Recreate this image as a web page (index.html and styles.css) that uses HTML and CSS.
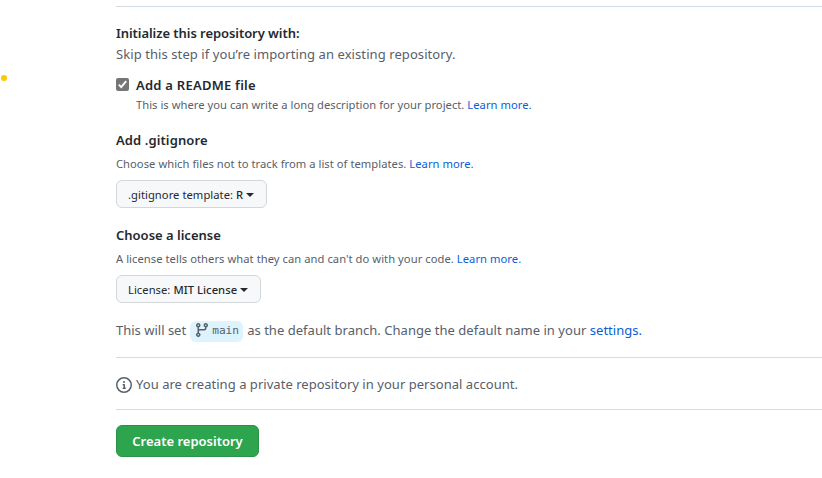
FILE: index.html
```html
<!DOCTYPE html>
<html lang="en">
<head>
<meta charset="utf-8">
<title>Create a new repository</title>
<link rel="stylesheet" href="styles.css">
</head>
<body>
<span class="dot"></span>
<main class="form">
  <section class="group init">
    <h2 class="heading h-init">Initialize this repository with:</h2>
    <p class="text t-skip">Skip this step if you’re importing an existing repository.</p>
    <div class="check-row">
      <svg class="check" width="13" height="13" viewBox="0 0 13 13"><rect width="13" height="13" rx="2" fill="#767676"/><path d="M2.8 6.7 5.2 9.2 10.2 3.2" fill="none" stroke="#fff" stroke-width="1.9"/></svg>
      <div>
        <h2 class="heading h-readme">Add a README file</h2>
        <p class="note n-readme">This is where you can write a long description for your project. <a href="#">Learn more.</a></p>
      </div>
    </div>
  </section>
  <section class="group gitignore">
    <h2 class="heading h-ignore">Add .gitignore</h2>
    <p class="note n-ignore">Choose which files not to track from a list of templates. <a href="#">Learn more.</a></p>
    <button class="select s-ignore"><span>.gitignore template: <b>R</b></span><i class="caret"></i></button>
  </section>
  <section class="group license">
    <h2 class="heading h-license">Choose a license</h2>
    <p class="note n-license">A license tells others what they can and can't do with your code. <a href="#">Learn more.</a></p>
    <button class="select s-license"><span>License: <b>MIT License</b></span><i class="caret"></i></button>
  </section>
  <div class="branch-row">
    <span class="t-set">This will set</span>
    <span class="branch"><svg width="16" height="16" viewBox="0 0 16 16" fill="currentColor"><path fill-rule="evenodd" d="M11.75 2.5a.75.75 0 100 1.5.75.75 0 000-1.5zm-2.25.75a2.25 2.25 0 113 2.122V6A2.5 2.5 0 0110 8.500H6a1 1 0 00-1 1v1.128a2.251 2.251 0 11-1.500 0V5.372a2.250 2.250 0 111.500 0v1.836A2.492 2.492 0 016 7h4a1 1 0 001-1v-.628A2.250 2.250 0 019.500 3.250zM4.250 12a.75.75 0 100 1.500.75.75 0 000-1.500zM3.500 3.250a.75.75 0 111.500 0 .75.75 0 01-1.500 0z"/></svg><code>main</code></span>
    <span class="t-default">as the default branch. Change the default name in your <a href="#">settings.</a></span>
  </div>
  <div class="info-row">
    <svg width="16" height="16" viewBox="0 0 16 16" fill="currentColor"><path fill-rule="evenodd" d="M8 1.500a6.500 6.500 0 100 13 6.500 6.500 0 000-13zM0 8a8 8 0 1116 0A8 8 0 010 8zm6.500-.25A.75.75 0 017.250 7h1a.75.75 0 01.75.75v2.750h.250a.75.75 0 010 1.500h-2a.75.75 0 010-1.500h.250v-2h-.250a.75.75 0 01-.75-.75zM8 6a1 1 0 100-2 1 1 0 000 2z"/></svg>
    <span class="t-info">You are creating a private repository in your personal account.</span>
  </div>
  <button class="create">Create repository</button>
</main>
</body>
</html>
```

FILE: styles.css
```css
* { box-sizing: border-box; }
body {
  margin: 0;
  height: 478px;
  overflow: hidden;
  background: #fff;
  color: #57606a;
  font: 13px/21px "Noto Sans", sans-serif;
  white-space: nowrap;
}
h2, p { margin: 0; }
a { color: #0860d8; text-decoration: none; }
.dot {
  position: absolute;
  left: 1px;
  top: 75px;
  width: 6px;
  height: 6px;
  border-radius: 50%;
  background: #ffc800;
}
.form { margin-left: 116px; padding-top: 6px; }
.init { border-top: 1px solid #d3dbe1; padding-top: 16px; }
.group { margin-bottom: 16px; }
.gitignore { margin-bottom: 17px; }
.license { margin-bottom: 18px; }
.heading { color: #24292f; font-size: 13px; font-weight: 600; line-height: 21px; }
.h-init { letter-spacing: -0.06px; }
.h-readme { letter-spacing: 0.24px; }
.h-ignore { letter-spacing: 0.1px; }
.t-skip { letter-spacing: 0.08px; }
.check-row { display: flex; gap: 7px; margin-top: 10px; }
.check { margin-top: 3px; }
.note { font-size: 11.2px; line-height: 18px; letter-spacing: 0.03px; }
.n-ignore { letter-spacing: 0.04px; }
.n-license { letter-spacing: 0.05px; }
.group > .note { margin: 4px 0 7px; }
.select {
  display: flex;
  align-items: center;
  justify-content: space-between;
  height: 28px;
  padding: 1px 12px 0 11px;
  border: 1px solid #d3d7da;
  border-radius: 6px;
  background: #f6f8fa;
  color: #24292f;
  font: 11.2px/20px "Noto Sans", sans-serif;
}
.select b { font-weight: 500; }
.s-ignore { width: 151px; letter-spacing: 0.05px; }
.s-license { width: 145px; letter-spacing: 0.05px; }
.caret { border: 4px solid transparent; border-top-color: #24292f; border-bottom: 0; }
.branch-row { display: flex; align-items: center; height: 21px; }
.t-set, .t-default { margin-top: -2px; }
.t-default { letter-spacing: 0.03px; }
.branch {
  display: flex;
  align-items: center;
  width: 53px;
  height: 21px;
  margin: 0 4px;
  padding-left: 4px;
  border-radius: 6px;
  background: #ddf4ff;
}
.branch svg { margin-top: -3px; }
.branch code { margin: -1px 0 0 2px; font: 11.2px/18px "DejaVu Sans Mono", monospace; }
.info-row {
  display: flex;
  align-items: center;
  gap: 4px;
  height: 53px;
  padding-top: 2px;
  margin: 15px 0;
  border-top: 1px solid #d8dbe0;
  border-bottom: 1px solid #d8dbe0;
}
.t-info { margin-top: -1px; letter-spacing: 0.035px; }
.create {
  width: 143px;
  height: 32px;
  padding: 0;
  border: 1px solid #2a9147;
  border-radius: 6px;
  background: #2da44e;
  color: #fff;
  font: 600 13px/20px "Noto Sans", sans-serif;
}
```
